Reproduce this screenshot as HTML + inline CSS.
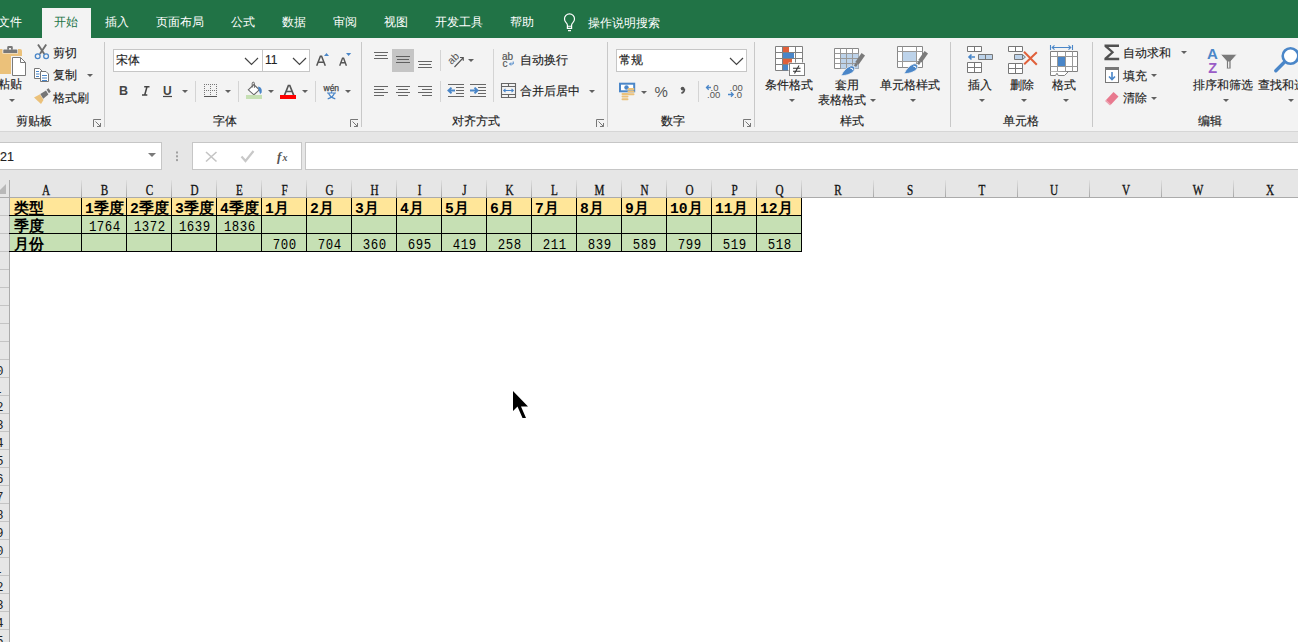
<!DOCTYPE html>
<html><head><meta charset="utf-8">
<style>
*{margin:0;padding:0;box-sizing:border-box}
html,body{width:1298px;height:642px;overflow:hidden;background:#fff}
body{position:relative;font-family:"Liberation Sans",sans-serif;font-size:12px;color:#262626}
.a{position:absolute;white-space:nowrap}
#tabs{position:absolute;left:0;top:0;width:1298px;height:38px;background:#217346}
.tab{position:absolute;top:14px;color:#fff;font-size:12px;line-height:16px}
#ribbon{position:absolute;left:0;top:38px;width:1298px;height:94px;background:#f3f3f3;border-bottom:1px solid #d6d6d6}
.sep{position:absolute;width:1px;background:#c8c8c8}
.lb{color:#404040}
.lbl{position:absolute;top:78px;font-size:12px;line-height:16px;color:#404040}
.t{position:absolute;font-size:12px;line-height:16px;color:#222;white-space:nowrap;-webkit-text-stroke:.15px #222}
.arr{position:absolute;width:0;height:0;border-left:3px solid transparent;border-right:3px solid transparent;border-top:3px solid #606060}
.box{position:absolute;background:#fff;border:1px solid #c6c6c6}
#fbar{position:absolute;left:0;top:132px;width:1298px;height:48px;background:#e6e6e6}
#grid{position:absolute;left:0;top:180px;width:1298px;height:462px}
.ch{position:absolute;top:181px;height:17px;font-family:"Liberation Serif",serif;font-size:14px;line-height:18px;text-align:center;color:#111;-webkit-text-stroke:.3px #111;transform:scale(.8,1.06);transform-origin:50% 0}
.cell{position:absolute;height:17px;font-family:"Liberation Mono",monospace;font-size:14.67px;line-height:18px;color:#000;white-space:nowrap}
.b{font-weight:bold}
.n{font-size:12.4px;padding-top:0.5px;letter-spacing:.5px;text-indent:.5px;transform:scaleY(1.16);transform-origin:50% 0}
</style></head><body>
<div id="tabs">
  <div class="a" style="left:42px;top:8px;width:49px;height:30px;background:#f3f3f3"></div>
  <div class="tab" style="left:-2px">文件</div>
  <div class="tab" style="left:54px;color:#217346">开始</div>
  <div class="tab" style="left:105px">插入</div>
  <div class="tab" style="left:156px">页面布局</div>
  <div class="tab" style="left:231px">公式</div>
  <div class="tab" style="left:282px">数据</div>
  <div class="tab" style="left:333px">审阅</div>
  <div class="tab" style="left:384px">视图</div>
  <div class="tab" style="left:435px">开发工具</div>
  <div class="tab" style="left:510px">帮助</div>
  <svg class="a" style="left:0;top:0" width="700" height="38"><path d="M567.4 28.3v-3.3c0-.9-.5-1.6-1.3-2.4a5 5 0 1 1 6.8 0c-.8.8-1.3 1.5-1.3 2.4v3.3z" fill="none" stroke="#fff" stroke-width="1.2"/><path d="M567.4 26.2h4.2M568 30.6h3" stroke="#fff" stroke-width="1.1"/></svg>
  <div class="tab" style="left:588px;top:15px">操作说明搜索</div>
</div>
<div id="ribbon"></div>
<!-- ribbon text -->
<div class="t" style="left:-2px;top:76px">粘贴</div>
<div class="t" style="left:53px;top:45px">剪切</div>
<div class="t" style="left:53px;top:67px">复制</div>
<div class="t" style="left:53px;top:90px">格式刷</div>
<div class="t lb" style="left:16px;top:113px">剪贴板</div>
<div class="t lb" style="left:213px;top:113px">字体</div>
<div class="t" style="left:520px;top:52px">自动换行</div>
<div class="t" style="left:520px;top:83px">合并后居中</div>
<div class="t lb" style="left:452px;top:113px">对齐方式</div>
<div class="t lb" style="left:661px;top:113px">数字</div>
<div class="t" style="left:765px;top:77px">条件格式</div>
<div class="t" style="left:835px;top:77px">套用</div>
<div class="t" style="left:818px;top:92px">表格格式</div>
<div class="t" style="left:880px;top:77px">单元格样式</div>
<div class="t lb" style="left:840px;top:113px">样式</div>
<div class="t" style="left:968px;top:77px">插入</div>
<div class="t" style="left:1010px;top:77px">删除</div>
<div class="t" style="left:1052px;top:77px">格式</div>
<div class="t lb" style="left:1003px;top:113px">单元格</div>
<div class="t" style="left:1123px;top:45px">自动求和</div>
<div class="t" style="left:1123px;top:68px">填充</div>
<div class="t" style="left:1123px;top:90px">清除</div>
<div class="t" style="left:1193px;top:77px">排序和筛选</div>
<div class="t" style="left:1258px;top:77px">查找和选择</div>
<div class="t lb" style="left:1198px;top:113px">编辑</div>
<!-- boxes -->
<div class="box" style="left:113px;top:49px;width:150px;height:23px"></div>
<div class="box" style="left:262px;top:49px;width:48px;height:23px"></div>
<div class="t" style="left:116px;top:52px">宋体</div>
<div class="t" style="left:265px;top:52px">11</div>
<div class="box" style="left:616px;top:49px;width:131px;height:23px"></div>
<div class="t" style="left:619px;top:52px">常规</div>
<div class="a" style="left:392px;top:49px;width:22px;height:23px;background:#c5c5c5"></div>
<!-- separators -->
<div class="sep" style="left:104px;top:42px;height:85px"></div>
<div class="sep" style="left:361px;top:42px;height:85px"></div>
<div class="sep" style="left:607px;top:42px;height:85px"></div>
<div class="sep" style="left:754px;top:42px;height:85px"></div>
<div class="sep" style="left:950px;top:42px;height:85px"></div>
<div class="sep" style="left:1092px;top:42px;height:85px"></div>
<div class="sep" style="left:195px;top:81px;height:21px;background:#d4d4d4"></div>
<div class="sep" style="left:238px;top:81px;height:21px;background:#d4d4d4"></div>
<div class="sep" style="left:315px;top:81px;height:21px;background:#d4d4d4"></div>
<div class="sep" style="left:440px;top:50px;height:21px;background:#d4d4d4"></div>
<div class="sep" style="left:440px;top:81px;height:21px;background:#d4d4d4"></div>
<div class="sep" style="left:493px;top:49px;height:53px;background:#d4d4d4"></div>
<div class="sep" style="left:698px;top:81px;height:21px;background:#d4d4d4"></div>
<svg class="a" style="left:0;top:0" width="1298" height="180" viewBox="0 0 1298 180">
<!-- paste -->
<path d="M0 49h20a2 2 0 0 1 2 2v23h-22z" fill="#EBC17A"/>
<path d="M3.5 48.5h13.5a1 1 0 0 1 1 1v4h-15.5v-4a1 1 0 0 1 1-1z" fill="#f3f3f3"/>
<path d="M4 49.5h12.5a.8.8 0 0 1 .8.8v2.7h-14v-2.7a.8.8 0 0 1 .7-.8z" fill="#787878"/>
<path d="M8.5 46h3a1.3 1.3 0 0 1 1.3 1.3v2.5h-5.6v-2.5a1.3 1.3 0 0 1 1.3-1.3z" fill="#787878"/>
<rect x="9" y="48" width="2" height="1.6" fill="#f3f3f3"/>
<rect x="11" y="56" width="16" height="21" fill="#f3f3f3"/>
<path d="M12.5 57.5h8l5 5v13h-13z" fill="#fff" stroke="#7a7a7a" stroke-width="1"/>
<path d="M20.5 57.5v5h5" fill="none" stroke="#7a7a7a" stroke-width="1"/>
<path d="M9 99h6l-3 3z" fill="#606060"/>
<!-- scissors -->
<path d="M38 44.5l6.3 9.5M46.2 44.5l-6.3 9.5" stroke="#6e6e6e" stroke-width="1.9" fill="none"/>
<circle cx="37.7" cy="56.2" r="2.4" fill="#f3f3f3" stroke="#4a86c8" stroke-width="1.3"/>
<circle cx="46.1" cy="56.2" r="2.4" fill="#f3f3f3" stroke="#4a86c8" stroke-width="1.3"/>
<!-- copy -->
<path d="M34.5 68.5h5l2.5 2.5v7.5h-7.5z" fill="#fff" stroke="#777"/>
<path d="M36 71.5h3M36 74h3.5M36 76.5h3" stroke="#4a86c8"/>
<path d="M40.5 71.5h5.5l2.5 2.5v7.5h-8z" fill="#fff" stroke="#777"/>
<path d="M42 75.5h5M42 78h5M42 80.5h5" stroke="#4a86c8"/>
<path d="M87 74h6l-3 3z" fill="#606060"/>
<!-- brush -->
<path d="M34 97.5L40 94.2L43.5 100L41 104Z" fill="#EBC17A"/>
<path d="M40.3 94L46 90.6L48.4 94.6L43.2 98.8Z" fill="#767676"/>
<path d="M46.6 89.6L48.6 88.2L50.8 91.6L48.9 93.2Z" fill="#767676"/>
<!-- launchers -->
<g fill="none" stroke="#777" stroke-width="1">
<path d="M93.5 127v-7.5h7.5M95.5 121.5l5 5M97 126.5h3.5v-3.5"/>
<path d="M350.5 127v-7.5h7.5M352.5 121.5l5 5M354 126.5h3.5v-3.5"/>
<path d="M596.5 127v-7.5h7.5M598.5 121.5l5 5M600 126.5h3.5v-3.5"/>
<path d="M743.5 127v-7.5h7.5M745.5 121.5l5 5M747 126.5h3.5v-3.5"/>
</g>
<!-- chevrons -->
<g fill="none" stroke="#444" stroke-width="1.2">
<path d="M245 58l6.5 6.5 6.5-6.5"/>
<path d="M293 58l6.5 6.5 6.5-6.5"/>
<path d="M730 58l6.5 6.5 6.5-6.5"/>
</g>
<!-- grow/shrink font -->
<path d="M316.7 65.8l3.7-9.6h1.2l3.7 9.6M318.2 62.2h5.6" fill="none" stroke="#555" stroke-width="1.5"/>
<path d="M324 56l2.5-3 2.5 3z" fill="#4a86c8"/>
<path d="M339.7 65.8l2.8-7.6h1.1l2.8 7.6M340.9 62.8h4.3" fill="none" stroke="#555" stroke-width="1.4"/>
<path d="M346 53h5.2l-2.6 3z" fill="#4a86c8"/>
<!-- B I U -->
<text x="119" y="95" font-family="Liberation Sans" font-weight="bold" font-size="12.5" fill="#444">B</text>
<path d="M144.2 86.8h5.3M142 95h5.3M147 86.8l-2.3 8.2" stroke="#444" stroke-width="1.5" fill="none"/>
<text x="163" y="95" font-family="Liberation Sans" font-weight="bold" font-size="12" fill="#444">U</text>
<path d="M163 96.5h9" stroke="#444" stroke-width="1.2"/>
<path d="M182 90h6l-3 3z" fill="#606060"/>
<!-- borders icon -->
<g fill="#777">
<path d="M204 84h13v1h-13zM204 90h13v1h-13zM204 84h1v13h-1zM210 84h1v13h-1zM216 84h1v13h-1z" fill="none"/>
</g>
<path d="M204.5 84v12M210.5 84v12M216.5 84v12M204 84.5h13M204 90.5h13" stroke="#777" stroke-dasharray="1 1" fill="none"/>
<path d="M204 96.5h13" stroke="#555" stroke-width="1"/>
<path d="M225 90h6l-3 3z" fill="#606060"/>
<!-- fill color -->
<path d="M248.3 89.8l5.6-5.2 5.4 5.2-5.4 5z" fill="#fff" stroke="#666" stroke-width="1.1"/>
<path d="M252.2 87.5v-4.2a1 1 0 0 1 2.2 0v4.5" fill="none" stroke="#666" stroke-width="1"/>
<path d="M258 86.6c2.5.3 4.3 2.6 3.6 5.6l-1.5 2-1.4-4.6z" fill="#4a86c8"/>
<rect x="246" y="95" width="16" height="4" fill="#C6E0B4"/>
<path d="M268 90h6l-3 3z" fill="#606060"/>
<!-- font color -->
<path d="M284.5 95.2l3.9-9.7h1.4l3.9 9.7M286.2 91.5h5.8" fill="none" stroke="#555" stroke-width="1.7"/>
<rect x="280" y="95" width="16" height="4" fill="#ff0000"/>
<path d="M302 90h6l-3 3z" fill="#606060"/>
<!-- wen -->
<text x="323.5" y="90.5" font-family="Liberation Sans" font-size="8.5" fill="#444" stroke="#444" stroke-width=".25">wén</text>
<path d="M327 93h9M331.5 91.3v1.7M328.5 93c1 3 3 4.8 6.8 5.8M334.5 93c-1 3-3 4.8-6.8 5.8" stroke="#4a86c8" stroke-width="1.2" fill="none"/>
<path d="M345 90h6l-3 3z" fill="#606060"/>
<!-- alignment top row -->
<g stroke="#666" stroke-width="1">
<path d="M374 52.5h14M375 55.5h12M374 58.5h14"/>
<path d="M396 56.5h14M397 59.5h12M396 62.5h14" stroke="#606060"/>
<path d="M418 61.5h14M419 64.5h12M418 67.5h14"/>
<path d="M374 86.5h14M374 89.5h10M374 92.5h14M374 95.5h10"/>
<path d="M396 86.5h14M398 89.5h10M396 92.5h14M398 95.5h10"/>
<path d="M418 86.5h14M422 89.5h10M418 92.5h14M422 95.5h10"/>
<path d="M448 84.5h16M456 87.5h8M456 90.5h8M456 93.5h8M448 96.5h16"/>
<path d="M470 84.5h16M478 87.5h8M478 90.5h8M478 93.5h8M470 96.5h16"/>
</g>
<path d="M451.5 87.6l-3 2.9 3 2.9M449 90.5h6" stroke="#4a86c8" stroke-width="2" fill="none"/>
<path d="M474.5 87.6l3 2.9-3 2.9M470 90.5h6.5" stroke="#4a86c8" stroke-width="2" fill="none"/>
<!-- orientation -->
<text x="447" y="62" font-family="Liberation Sans" font-size="10.5" fill="#555" transform="rotate(-45 453 58)">ab</text>
<path d="M454.5 67l8.5-9M460 57.5h3.3v3.3" stroke="#555" stroke-width="1.1" fill="none"/>
<path d="M468 59h6l-3 3z" fill="#606060"/>
<!-- wrap -->
<text x="502" y="60" font-family="Liberation Sans" font-size="10" fill="#555" stroke="#555" stroke-width=".2">ab</text>
<text x="502.5" y="66.5" font-family="Liberation Sans" font-size="10" fill="#555" stroke="#555" stroke-width=".2">c</text>
<path d="M513.2 61.5v2.5h-3.5M511 62.5l-1.5 1.5 1.5 1.5" stroke="#4a86c8" fill="none"/>
<!-- merge -->
<path d="M501.5 83.5h14v14h-14zM501.5 86.5h14M501.5 94.5h14M508.5 83.5v3M508.5 94.5v3" fill="none" stroke="#666" stroke-width="1.1"/>
<path d="M503.5 90.5h10M505.5 88.8l-1.8 1.7 1.8 1.7M511.5 88.8l1.8 1.7-1.8 1.7" fill="none" stroke="#4a86c8" stroke-width="1.1"/>
<path d="M589 90h6l-3 3z" fill="#606060"/>
<!-- number -->
<rect x="620" y="83.7" width="14.2" height="7.6" fill="#fff" stroke="#4a86c8" stroke-width="2"/>
<circle cx="626.5" cy="87.5" r="2.2" fill="#4a86c8"/>
<g fill="#EBC17A">
<rect x="627.5" y="88" width="7" height="2" rx="1"/><rect x="627.5" y="90.6" width="7" height="2" rx="1"/><rect x="627.5" y="93.2" width="7" height="2" rx="1"/>
<rect x="621.5" y="93" width="7" height="2" rx="1"/><rect x="621.5" y="95.6" width="7" height="2" rx="1"/><rect x="621.5" y="98.2" width="7" height="2" rx="1"/>
</g>
<path d="M641 91h6l-3 3z" fill="#606060"/>
<text x="654.5" y="97.3" font-family="Liberation Sans" font-size="15" fill="#555">%</text>
<circle cx="682.6" cy="88.6" r="1.9" fill="#555"/>
<path d="M684.4 88.8c.2 2-.8 3.6-3 4.5" stroke="#555" stroke-width="1.6" fill="none"/>
<text x="710.5" y="90.5" font-family="Liberation Sans" font-size="9.5" fill="#555">.0</text>
<text x="707" y="97.5" font-family="Liberation Sans" font-size="9.5" fill="#555">.00</text>
<path d="M711 87.5h-4.5M708.7 85.3l-2.2 2.2 2.2 2.2" stroke="#4a86c8" fill="none" stroke-width="1.3"/>
<text x="729.5" y="90.5" font-family="Liberation Sans" font-size="9.5" fill="#555">.00</text>
<text x="734" y="97.5" font-family="Liberation Sans" font-size="9.5" fill="#555">.0</text>
<path d="M728 94.5h5M731 92.3l2.2 2.2-2.2 2.2" stroke="#4a86c8" fill="none" stroke-width="1.3"/>
<!-- styles arrows -->
<g fill="#606060">
<path d="M789 99h6l-3 3z"/><path d="M870 99h6l-3 3z"/><path d="M910 99h6l-3 3z"/>
<path d="M979 99h6l-3 3z"/><path d="M1021 99h6l-3 3z"/><path d="M1063 99h6l-3 3z"/>
<path d="M1181 51h6l-3 3z"/><path d="M1151 74h6l-3 3z"/><path d="M1151 97h6l-3 3z"/>
<path d="M1223 99h6l-3 3z"/><path d="M1288 99h6l-3 3z"/>
</g>
<!-- conditional formatting -->
<path d="M775.5 46.5h27v24h-27z" fill="#fff" stroke="#808080"/>
<rect x="783" y="47" width="6" height="5.2" fill="#E0603A"/>
<rect x="783" y="53" width="11" height="5.2" fill="#4a86c8"/>
<rect x="783" y="59" width="9" height="5.2" fill="#E0603A"/>
<rect x="783" y="65" width="5" height="5.2" fill="#4a86c8"/>
<path d="M775.5 52.5h27M775.5 58.5h27M775.5 64.5h27M782.5 46.5v24M795.5 46.5v24" fill="none" stroke="#808080"/>
<rect x="788.5" y="62.5" width="17" height="14" fill="#f3f3f3"/>
<rect x="789.5" y="63.5" width="15" height="12" fill="#fff" stroke="#808080"/>
<path d="M793 68.2h7.5M793 71.2h7.5M799 65.5l-4.5 8" stroke="#333" stroke-width="1.1" fill="none"/>
<!-- format as table -->
<path d="M834.5 48.5h24v20h-24z" fill="#fff" stroke="#888"/>
<rect x="841" y="53.5" width="17.5" height="15" fill="#BDD3EA"/>
<path d="M834.5 53.5h24M834.5 58.5h24M834.5 63.5h24M840.5 48.5v20M846.5 48.5v20M852.5 48.5v20" stroke="#999" fill="none"/>
<g id="brush1">
<path d="M857 63.2L863.3 54.2" stroke="#7a7a7a" stroke-width="4.2"/>
<path d="M855 66.2L856.8 63.6" stroke="#7a7a7a" stroke-width="2.6"/>
<path d="M841 75.8c2.2-4.5 5.5-8.5 9.5-9.8c2.5-.8 4.8 1.2 4 3.8c-1.6 3.6-7 5.6-13.5 6z" fill="#4a86c8" stroke="#f3f3f3" stroke-width=".8"/>
<path d="M850.3 68.3c1.5-.3 2.8.6 2.5 1.9" stroke="#fff" stroke-width="1.1" fill="none"/>
</g>
<!-- cell styles -->
<path d="M897.5 46.5h25v21h-25z" fill="#fff" stroke="#888"/>
<rect x="903" y="51.5" width="13.5" height="10" fill="#BDD3EA"/>
<path d="M897.5 51.5h25M897.5 61.5h25M902.5 46.5v21M916.5 46.5v21" fill="none" stroke="#999"/>
<use href="#brush1" transform="translate(63 -2)"/>
<!-- insert cells -->
<path d="M967.5 46.5h14v5h-14zM974.5 46.5v5M967.5 62.5h14v10h-14zM967.5 67.5h14M974.5 62.5v10" fill="#fff" stroke="#777"/>
<path d="M978.5 54.5h14v5h-14zM985.5 54.5v5" fill="#BDD3EA" stroke="#777"/>
<path d="M975 57h-6M971.5 54.5l-2.5 2.5 2.5 2.5" stroke="#4a86c8" stroke-width="1.6" fill="none"/>
<!-- delete cells -->
<path d="M1008.5 46.5h14v5h-14zM1015.5 46.5v5M1008.5 63.5h14v10h-14zM1008.5 68.5h14M1015.5 63.5v10" fill="#fff" stroke="#777"/>
<path d="M1014.5 54.5h8v5h-8zM1022.5 54.5l3 2.5-3 2.5" fill="#BDD3EA" stroke="#777"/>
<path d="M1023.5 52l13 12.5M1036.5 52.5l-12.5 11.5" stroke="#f3f3f3" stroke-width="3.4"/>
<path d="M1024 51.8l12.8 13M1036.8 52.2l-12.6 12" stroke="#E0603A" stroke-width="2"/>
<!-- format cells -->
<path d="M1050.5 45v5M1072.5 45v5M1052 47.5h19M1054.5 45.3l-2.3 2.2 2.3 2.2M1068.5 45.3l2.3 2.2-2.3 2.2" stroke="#4a86c8" stroke-width="1.1" fill="none"/>
<path d="M1050.5 51.5h27v20h-27z" fill="#fff" stroke="#808080"/>
<rect x="1058" y="57" width="7" height="9" fill="#4a86c8"/>
<path d="M1050.5 56.5h27M1050.5 66.5h27M1057.5 51.5v20M1065.5 51.5v20M1072.5 51.5v20" fill="none" stroke="#999"/>
<path d="M1050.5 71.5V75.5H1055.5L1057 73.2L1058.2 75.5H1064.5L1068 72" fill="#fff" stroke="#808080"/>
<!-- sigma -->
<path d="M1104.5 44.5h14.5v2.6h-10.6l5.8 5.2-6 5.4h11v2.6h-14.8v-2.2l6.6-5.8-6.5-5.6z" fill="#505050"/>
<!-- fill down -->
<rect x="1105.5" y="67.5" width="13" height="15" fill="#fff" stroke="#777"/>
<rect x="1105" y="67" width="14" height="3" fill="#777"/>
<path d="M1112 72v7.5M1109 76.5l3 3 3-3" stroke="#4a86c8" stroke-width="1.6" fill="none"/>
<!-- eraser -->
<path d="M1106 100l7.5-8 5 4.5-7.5 8z" fill="#E8798E"/>
<path d="M1106 100l5 4.5-1 1-5-4.5z" fill="#E8798E" opacity=".7"/>
<!-- sort filter -->
<text x="1207" y="58.5" font-family="Liberation Sans" font-weight="bold" font-size="15" fill="#4a86c8">A</text>
<text x="1208.3" y="72.6" font-family="Liberation Sans" font-weight="bold" font-size="14.5" fill="#9a5cc6">Z</text>
<path d="M1220.5 54.3h16.5l-6 6.8v7.8h-4.5v-7.8z" fill="#7a7a7a" stroke="#f3f3f3" stroke-width=".8"/>
<path d="M1228.7 61.5v6.2" stroke="#f3f3f3" stroke-width="1.3"/>
<!-- search -->
<circle cx="1290.5" cy="56" r="7.8" fill="#fff" stroke="#4a86c8" stroke-width="2.6"/>
<path d="M1284.3 62.2l-8.5 8.5" stroke="#4a86c8" stroke-width="3.4" stroke-linecap="round"/>
</svg>
<div id="fbar">
  <div class="box" style="left:-1px;top:10px;width:163px;height:28px"></div>
  <div class="t" style="left:-7px;top:17px;color:#222;font-size:12.5px">L21</div>
  <div class="arr" style="left:148px;top:21px;border-left-width:4px;border-right-width:4px;border-top-width:4px;border-top-color:#7a7a7a"></div>
  <div class="box" style="left:192px;top:10px;width:110px;height:28px"></div>
  <div class="box" style="left:305px;top:10px;width:1000px;height:28px"></div>
<svg class="a" style="left:0;top:-1px" width="1298" height="50">
<rect x="176" y="20.5" width="2" height="2" fill="#a0a0a0"/><rect x="176" y="24.3" width="2" height="2" fill="#a0a0a0"/><rect x="176" y="28.1" width="2" height="2" fill="#a0a0a0"/>
<path d="M206 21l10.5 9.5M216.5 21l-10.5 9.5" stroke="#c4c4c4" stroke-width="1.6"/>
<path d="M241.5 25.5l4 4.5 8-10" stroke="#c8c8c8" stroke-width="2.2" fill="none"/>
<text x="277" y="29.5" font-family="Liberation Serif" font-style="italic" font-weight="bold" font-size="13" fill="#555">f</text>
<text x="282.5" y="29.5" font-family="Liberation Serif" font-style="italic" font-weight="bold" font-size="10" fill="#555">x</text>
</svg>
</div>
<div class="a" style="left:0;top:180px;width:1298px;height:17px;background:#e6e6e6"></div>
<div class="a" style="left:0;top:197px;width:1298px;height:1px;background:#ababab"></div>
<div class="a" style="left:0;top:198px;width:9px;height:444px;background:#e6e6e6"></div>
<div class="a" style="left:9px;top:180px;width:1px;height:462px;background:#ababab"></div>
<svg class="a" style="left:0;top:183px" width="9" height="12"><path d="M6 1v10h-10z" fill="#b8b8b8"/></svg>
<div class="a" style="left:81px;top:180px;width:1px;height:17px;background:linear-gradient(#e0e0e0,#a8a8a8)"></div>
<div class="ch" style="left:10px;width:72px">A</div>
<div class="a" style="left:126px;top:180px;width:1px;height:17px;background:linear-gradient(#e0e0e0,#a8a8a8)"></div>
<div class="ch" style="left:82px;width:45px">B</div>
<div class="a" style="left:171px;top:180px;width:1px;height:17px;background:linear-gradient(#e0e0e0,#a8a8a8)"></div>
<div class="ch" style="left:127px;width:45px">C</div>
<div class="a" style="left:216px;top:180px;width:1px;height:17px;background:linear-gradient(#e0e0e0,#a8a8a8)"></div>
<div class="ch" style="left:172px;width:45px">D</div>
<div class="a" style="left:261px;top:180px;width:1px;height:17px;background:linear-gradient(#e0e0e0,#a8a8a8)"></div>
<div class="ch" style="left:217px;width:45px">E</div>
<div class="a" style="left:306px;top:180px;width:1px;height:17px;background:linear-gradient(#e0e0e0,#a8a8a8)"></div>
<div class="ch" style="left:262px;width:45px">F</div>
<div class="a" style="left:351px;top:180px;width:1px;height:17px;background:linear-gradient(#e0e0e0,#a8a8a8)"></div>
<div class="ch" style="left:307px;width:45px">G</div>
<div class="a" style="left:396px;top:180px;width:1px;height:17px;background:linear-gradient(#e0e0e0,#a8a8a8)"></div>
<div class="ch" style="left:352px;width:45px">H</div>
<div class="a" style="left:441px;top:180px;width:1px;height:17px;background:linear-gradient(#e0e0e0,#a8a8a8)"></div>
<div class="ch" style="left:397px;width:45px">I</div>
<div class="a" style="left:486px;top:180px;width:1px;height:17px;background:linear-gradient(#e0e0e0,#a8a8a8)"></div>
<div class="ch" style="left:442px;width:45px">J</div>
<div class="a" style="left:531px;top:180px;width:1px;height:17px;background:linear-gradient(#e0e0e0,#a8a8a8)"></div>
<div class="ch" style="left:487px;width:45px">K</div>
<div class="a" style="left:576px;top:180px;width:1px;height:17px;background:linear-gradient(#e0e0e0,#a8a8a8)"></div>
<div class="ch" style="left:532px;width:45px">L</div>
<div class="a" style="left:621px;top:180px;width:1px;height:17px;background:linear-gradient(#e0e0e0,#a8a8a8)"></div>
<div class="ch" style="left:577px;width:45px">M</div>
<div class="a" style="left:666px;top:180px;width:1px;height:17px;background:linear-gradient(#e0e0e0,#a8a8a8)"></div>
<div class="ch" style="left:622px;width:45px">N</div>
<div class="a" style="left:711px;top:180px;width:1px;height:17px;background:linear-gradient(#e0e0e0,#a8a8a8)"></div>
<div class="ch" style="left:667px;width:45px">O</div>
<div class="a" style="left:756px;top:180px;width:1px;height:17px;background:linear-gradient(#e0e0e0,#a8a8a8)"></div>
<div class="ch" style="left:712px;width:45px">P</div>
<div class="a" style="left:801px;top:180px;width:1px;height:17px;background:linear-gradient(#e0e0e0,#a8a8a8)"></div>
<div class="ch" style="left:757px;width:45px">Q</div>
<div class="a" style="left:873px;top:180px;width:1px;height:17px;background:linear-gradient(#e0e0e0,#a8a8a8)"></div>
<div class="ch" style="left:802px;width:72px">R</div>
<div class="a" style="left:945px;top:180px;width:1px;height:17px;background:linear-gradient(#e0e0e0,#a8a8a8)"></div>
<div class="ch" style="left:874px;width:72px">S</div>
<div class="a" style="left:1017px;top:180px;width:1px;height:17px;background:linear-gradient(#e0e0e0,#a8a8a8)"></div>
<div class="ch" style="left:946px;width:72px">T</div>
<div class="a" style="left:1089px;top:180px;width:1px;height:17px;background:linear-gradient(#e0e0e0,#a8a8a8)"></div>
<div class="ch" style="left:1018px;width:72px">U</div>
<div class="a" style="left:1161px;top:180px;width:1px;height:17px;background:linear-gradient(#e0e0e0,#a8a8a8)"></div>
<div class="ch" style="left:1090px;width:72px">V</div>
<div class="a" style="left:1233px;top:180px;width:1px;height:17px;background:linear-gradient(#e0e0e0,#a8a8a8)"></div>
<div class="ch" style="left:1162px;width:72px">W</div>
<div class="a" style="left:1305px;top:180px;width:1px;height:17px;background:linear-gradient(#e0e0e0,#a8a8a8)"></div>
<div class="ch" style="left:1234px;width:72px">X</div>
<div class="a" style="left:0;top:215px;width:9px;height:1px;background:#c4c4c4"></div>
<div class="a" style="left:0;top:233px;width:9px;height:1px;background:#c4c4c4"></div>
<div class="a" style="left:0;top:251px;width:9px;height:1px;background:#c4c4c4"></div>
<div class="a" style="left:0;top:269px;width:9px;height:1px;background:#c4c4c4"></div>
<div class="a" style="left:0;top:287px;width:9px;height:1px;background:#c4c4c4"></div>
<div class="a" style="left:0;top:305px;width:9px;height:1px;background:#c4c4c4"></div>
<div class="a" style="left:0;top:323px;width:9px;height:1px;background:#c4c4c4"></div>
<div class="a" style="left:0;top:341px;width:9px;height:1px;background:#c4c4c4"></div>
<div class="a" style="left:0;top:359px;width:9px;height:1px;background:#c4c4c4"></div>
<div class="a" style="left:0;top:377px;width:9px;height:1px;background:#c4c4c4"></div>
<div class="a" style="left:0;top:395px;width:9px;height:1px;background:#c4c4c4"></div>
<div class="a" style="left:0;top:413px;width:9px;height:1px;background:#c4c4c4"></div>
<div class="a" style="left:0;top:431px;width:9px;height:1px;background:#c4c4c4"></div>
<div class="a" style="left:0;top:449px;width:9px;height:1px;background:#c4c4c4"></div>
<div class="a" style="left:0;top:467px;width:9px;height:1px;background:#c4c4c4"></div>
<div class="a" style="left:0;top:485px;width:9px;height:1px;background:#c4c4c4"></div>
<div class="a" style="left:0;top:503px;width:9px;height:1px;background:#c4c4c4"></div>
<div class="a" style="left:0;top:521px;width:9px;height:1px;background:#c4c4c4"></div>
<div class="a" style="left:0;top:539px;width:9px;height:1px;background:#c4c4c4"></div>
<div class="a" style="left:0;top:557px;width:9px;height:1px;background:#c4c4c4"></div>
<div class="a" style="left:0;top:575px;width:9px;height:1px;background:#c4c4c4"></div>
<div class="a" style="left:0;top:593px;width:9px;height:1px;background:#c4c4c4"></div>
<div class="a" style="left:0;top:611px;width:9px;height:1px;background:#c4c4c4"></div>
<div class="a" style="left:0;top:629px;width:9px;height:1px;background:#c4c4c4"></div>
<div class="a" style="left:0;top:647px;width:9px;height:1px;background:#c4c4c4"></div>
<div class="a" style="left:10px;top:198px;width:791px;height:17px;background:#FFE699"></div>
<div class="a" style="left:10px;top:216px;width:791px;height:35px;background:#C6E0B4"></div>
<div class="cell b" style="left:14px;top:200px">类型</div>
<div class="cell b" style="left:85px;top:200px">1季度</div>
<div class="cell b" style="left:130px;top:200px">2季度</div>
<div class="cell b" style="left:175px;top:200px">3季度</div>
<div class="cell b" style="left:220px;top:200px">4季度</div>
<div class="cell b" style="left:265px;top:200px">1月</div>
<div class="cell b" style="left:310px;top:200px">2月</div>
<div class="cell b" style="left:355px;top:200px">3月</div>
<div class="cell b" style="left:400px;top:200px">4月</div>
<div class="cell b" style="left:445px;top:200px">5月</div>
<div class="cell b" style="left:490px;top:200px">6月</div>
<div class="cell b" style="left:535px;top:200px">7月</div>
<div class="cell b" style="left:580px;top:200px">8月</div>
<div class="cell b" style="left:625px;top:200px">9月</div>
<div class="cell b" style="left:670px;top:200px">10月</div>
<div class="cell b" style="left:715px;top:200px">11月</div>
<div class="cell b" style="left:760px;top:200px">12月</div>
<div class="cell b" style="left:14px;top:218px">季度</div>
<div class="cell n" style="left:82px;top:216px;width:45px;text-align:center">1764</div>
<div class="cell n" style="left:127px;top:216px;width:45px;text-align:center">1372</div>
<div class="cell n" style="left:172px;top:216px;width:45px;text-align:center">1639</div>
<div class="cell n" style="left:217px;top:216px;width:45px;text-align:center">1836</div>
<div class="cell b" style="left:14px;top:236px">月份</div>
<div class="cell n" style="left:262px;top:234px;width:45px;text-align:center">700</div>
<div class="cell n" style="left:307px;top:234px;width:45px;text-align:center">704</div>
<div class="cell n" style="left:352px;top:234px;width:45px;text-align:center">360</div>
<div class="cell n" style="left:397px;top:234px;width:45px;text-align:center">695</div>
<div class="cell n" style="left:442px;top:234px;width:45px;text-align:center">419</div>
<div class="cell n" style="left:487px;top:234px;width:45px;text-align:center">258</div>
<div class="cell n" style="left:532px;top:234px;width:45px;text-align:center">211</div>
<div class="cell n" style="left:577px;top:234px;width:45px;text-align:center">839</div>
<div class="cell n" style="left:622px;top:234px;width:45px;text-align:center">589</div>
<div class="cell n" style="left:667px;top:234px;width:45px;text-align:center">799</div>
<div class="cell n" style="left:712px;top:234px;width:45px;text-align:center">519</div>
<div class="cell n" style="left:757px;top:234px;width:45px;text-align:center">518</div>
<div class="a" style="left:9px;top:215px;width:793px;height:1px;background:#000"></div>
<div class="a" style="left:9px;top:233px;width:793px;height:1px;background:#000"></div>
<div class="a" style="left:9px;top:251px;width:793px;height:1px;background:#000"></div>
<div class="a" style="left:81px;top:198px;width:1px;height:54px;background:#000"></div>
<div class="a" style="left:126px;top:198px;width:1px;height:54px;background:#000"></div>
<div class="a" style="left:171px;top:198px;width:1px;height:54px;background:#000"></div>
<div class="a" style="left:216px;top:198px;width:1px;height:54px;background:#000"></div>
<div class="a" style="left:261px;top:198px;width:1px;height:54px;background:#000"></div>
<div class="a" style="left:306px;top:198px;width:1px;height:54px;background:#000"></div>
<div class="a" style="left:351px;top:198px;width:1px;height:54px;background:#000"></div>
<div class="a" style="left:396px;top:198px;width:1px;height:54px;background:#000"></div>
<div class="a" style="left:441px;top:198px;width:1px;height:54px;background:#000"></div>
<div class="a" style="left:486px;top:198px;width:1px;height:54px;background:#000"></div>
<div class="a" style="left:531px;top:198px;width:1px;height:54px;background:#000"></div>
<div class="a" style="left:576px;top:198px;width:1px;height:54px;background:#000"></div>
<div class="a" style="left:621px;top:198px;width:1px;height:54px;background:#000"></div>
<div class="a" style="left:666px;top:198px;width:1px;height:54px;background:#000"></div>
<div class="a" style="left:711px;top:198px;width:1px;height:54px;background:#000"></div>
<div class="a" style="left:756px;top:198px;width:1px;height:54px;background:#000"></div>
<div class="a" style="left:801px;top:198px;width:1px;height:54px;background:#000"></div>
<div class="a" style="left:-4px;top:364px;font-family:'Liberation Mono',monospace;font-size:12.5px;line-height:16px;color:#222">0</div>
<div class="a" style="left:-6px;top:382px;font-family:'Liberation Mono',monospace;font-size:12.5px;line-height:16px;color:#222">1</div>
<div class="a" style="left:-4px;top:400px;font-family:'Liberation Mono',monospace;font-size:12.5px;line-height:16px;color:#222">2</div>
<div class="a" style="left:-4px;top:418px;font-family:'Liberation Mono',monospace;font-size:12.5px;line-height:16px;color:#222">3</div>
<div class="a" style="left:-4px;top:436px;font-family:'Liberation Mono',monospace;font-size:12.5px;line-height:16px;color:#222">4</div>
<div class="a" style="left:-4px;top:454px;font-family:'Liberation Mono',monospace;font-size:12.5px;line-height:16px;color:#222">5</div>
<div class="a" style="left:-4px;top:472px;font-family:'Liberation Mono',monospace;font-size:12.5px;line-height:16px;color:#222">6</div>
<div class="a" style="left:-4px;top:490px;font-family:'Liberation Mono',monospace;font-size:12.5px;line-height:16px;color:#222">7</div>
<div class="a" style="left:-4px;top:508px;font-family:'Liberation Mono',monospace;font-size:12.5px;line-height:16px;color:#222">8</div>
<div class="a" style="left:-4px;top:526px;font-family:'Liberation Mono',monospace;font-size:12.5px;line-height:16px;color:#222">9</div>
<div class="a" style="left:-4px;top:544px;font-family:'Liberation Mono',monospace;font-size:12.5px;line-height:16px;color:#222">0</div>
<div class="a" style="left:-6px;top:562px;font-family:'Liberation Mono',monospace;font-size:12.5px;line-height:16px;color:#222">1</div>
<div class="a" style="left:-4px;top:580px;font-family:'Liberation Mono',monospace;font-size:12.5px;line-height:16px;color:#222">2</div>
<div class="a" style="left:-4px;top:598px;font-family:'Liberation Mono',monospace;font-size:12.5px;line-height:16px;color:#222">3</div>
<div class="a" style="left:-4px;top:616px;font-family:'Liberation Mono',monospace;font-size:12.5px;line-height:16px;color:#222">4</div>
<div class="a" style="left:-4px;top:634px;font-family:'Liberation Mono',monospace;font-size:12.5px;line-height:16px;color:#222">5</div>
<svg class="a" style="left:0;top:0" width="1298" height="642"><path d="M513 391v20l4.5-4.5 5 11.5h3.5l-5-11.5h7z" fill="#000"/></svg>
</body></html>
